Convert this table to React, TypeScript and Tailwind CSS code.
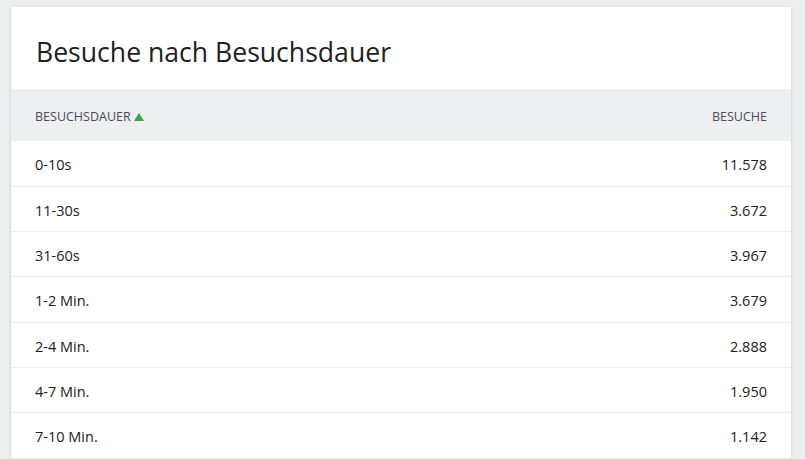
const rows = [
  { label: '0-10s', value: '11.578' },
  { label: '11-30s', value: '3.672' },
  { label: '31-60s', value: '3.967' },
  { label: '1-2 Min.', value: '3.679' },
  { label: '2-4 Min.', value: '2.888' },
  { label: '4-7 Min.', value: '1.950' },
  { label: '7-10 Min.', value: '1.142' },
];

export default function App() {
  return (
    <div className="h-[459px] overflow-hidden bg-[#eceef0] pl-[11px] pr-[14px] pt-[7px] font-['Open_Sans',sans-serif] text-[#222]">
      <div className="bg-white shadow-[0_1px_3px_rgba(0,0,0,0.15)]">
        <div className="h-[82px] px-[25px] pt-[27px]">
          <h2 className="text-[26.6px] leading-[36px] text-[#212121]">Besuche nach Besuchsdauer</h2>
        </div>
        <table className="w-full border-collapse">
          <thead>
            <tr className="h-[52px] bg-[#eeeff1] text-[12.5px] uppercase text-[#4a4a5a]">
              <th className="pl-[24px] pt-[4px] text-left font-normal">
                <span className="inline-flex items-center gap-[3px]">
                  Besuchsdauer
                  <svg width="10" height="8" viewBox="0 0 10 8">
                    <path d="M5 0 L10 8 L0 8 Z" fill="#43a047" />
                  </svg>
                </span>
              </th>
              <th className="pr-[24px] pt-[4px] text-right font-normal">Besuche</th>
            </tr>
          </thead>
          <tbody className="text-[14.5px]">
            {rows.map((r) => (
              <tr key={r.label} className="h-[45.33px] border-b border-[#eeeeee]">
                <td className="pl-[24px] pt-[3px] text-left">{r.label}</td>
                <td className="pr-[24px] pt-[3px] text-right">{r.value}</td>
              </tr>
            ))}
          </tbody>
        </table>
      </div>
    </div>
  );
}
